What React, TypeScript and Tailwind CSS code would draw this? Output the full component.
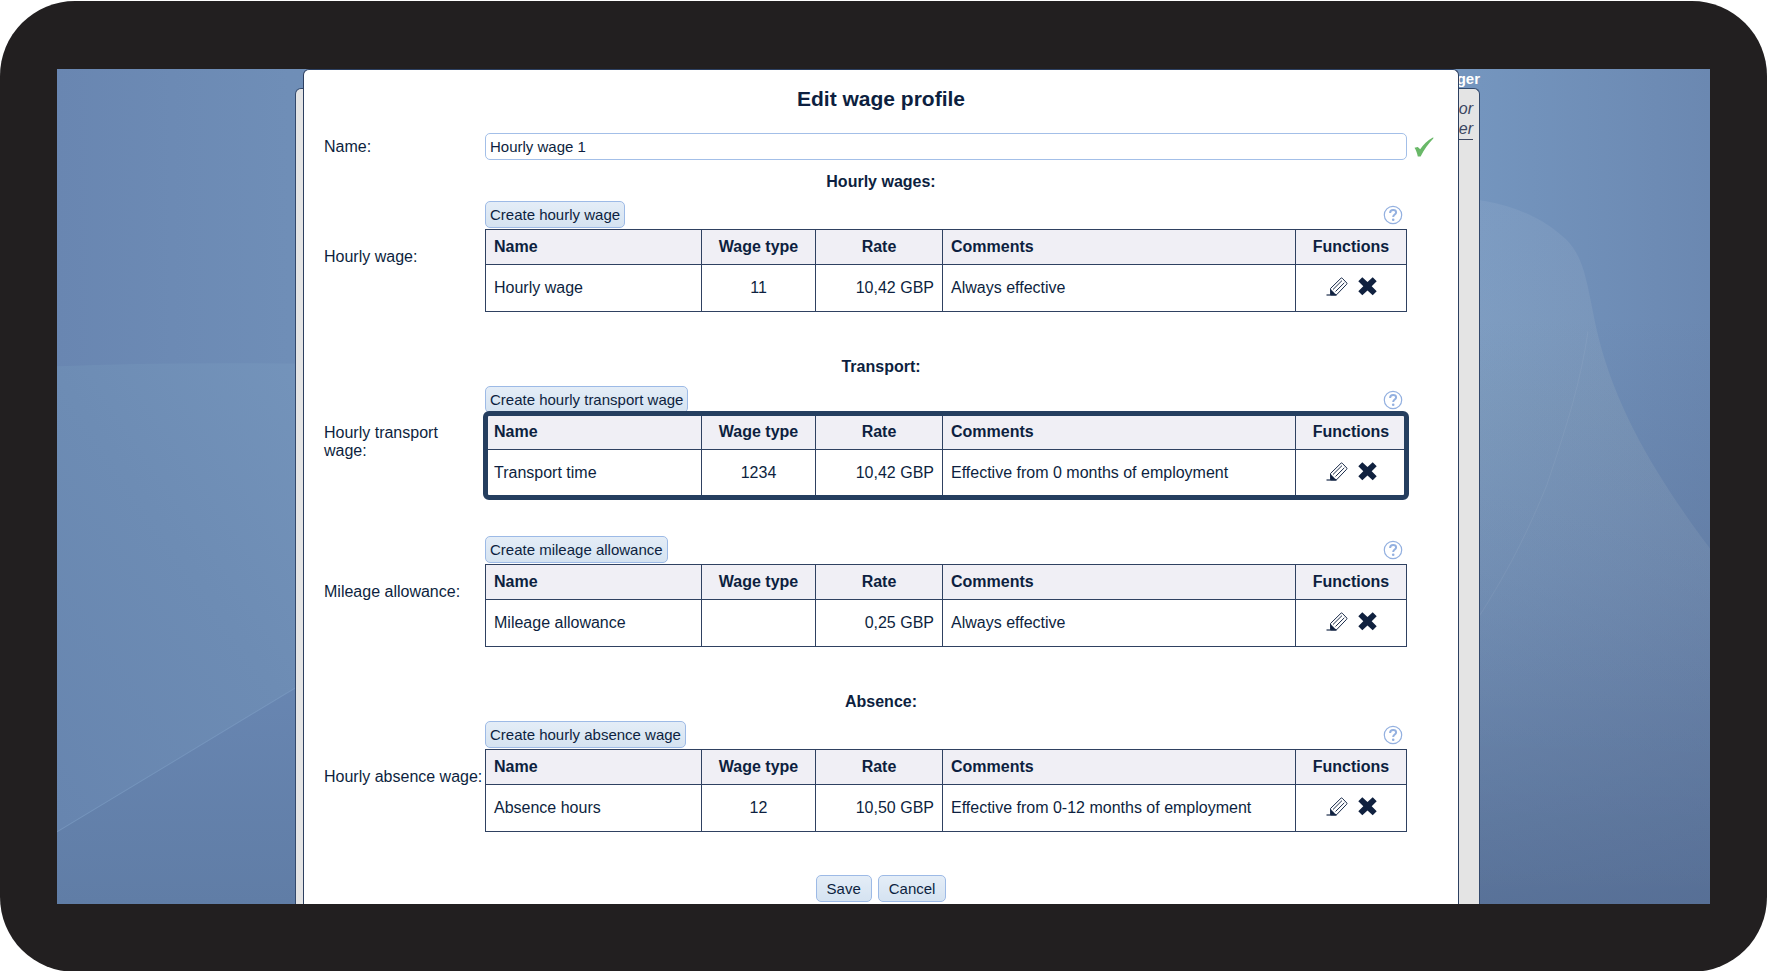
import { useState } from "react";

interface WageRow {
  name: string;
  wageType: string;
  rate: string;
  comments: string;
}

interface WageSection {
  id: string;
  heading?: string;
  label: string;
  createLabel: string;
  highlighted?: boolean;
  rows: WageRow[];
}

const sections: WageSection[] = [
  {
    id: "hourly",
    heading: "Hourly wages:",
    label: "Hourly wage:",
    createLabel: "Create hourly wage",
    rows: [
      { name: "Hourly wage", wageType: "11", rate: "10,42 GBP", comments: "Always effective" },
    ],
  },
  {
    id: "transport",
    heading: "Transport:",
    label: "Hourly transport wage:",
    createLabel: "Create hourly transport wage",
    highlighted: true,
    rows: [
      {
        name: "Transport time",
        wageType: "1234",
        rate: "10,42 GBP",
        comments: "Effective from 0 months of employment",
      },
    ],
  },
  {
    id: "mileage",
    label: "Mileage allowance:",
    createLabel: "Create mileage allowance",
    rows: [
      { name: "Mileage allowance", wageType: "", rate: "0,25 GBP", comments: "Always effective" },
    ],
  },
  {
    id: "absence",
    heading: "Absence:",
    label: "Hourly absence wage:",
    createLabel: "Create hourly absence wage",
    rows: [
      {
        name: "Absence hours",
        wageType: "12",
        rate: "10,50 GBP",
        comments: "Effective from 0-12 months of employment",
      },
    ],
  },
];

const buttonBase =
  "h-[27px] rounded-[5px] border border-[#9dbae6] bg-linear-to-b from-[#e4edf7] to-[#d5e3f1] text-[15px] leading-[18px] whitespace-nowrap";

export default function App() {
  return (
    <div className="min-h-screen bg-white pt-px flex font-['Liberation_Sans',Arial,sans-serif] text-base text-[#0d1f40]">
      {/* Device frame */}
      <div className="flex-1 flex rounded-[75px] bg-[#221f20] px-[57px] py-[68px]">
        {/* Screen */}
        <div className="relative flex-1 flex overflow-hidden bg-[#6c8bb4] pl-2">
          <Backdrop />
          <div className="relative mx-auto grid w-full max-w-[1185px]">
            <PageBehind />
            <EditWageProfile />
          </div>
        </div>
      </div>
    </div>
  );
}

function PageBehind() {
  return (
    <div className="col-start-1 row-start-1 flex flex-col text-right">
      <p className="h-[19px] text-[15px] leading-[19px] font-bold text-white">ger</p>
      <div className="flex-1 rounded-t-md border border-b-0 border-[#33496c] bg-[#e4e4e4] pt-2.5 pr-1.5 italic leading-5 text-[#3b4660]">
        <p>or</p>
        <p className="ml-auto w-40 border-b border-[#3b4660]">er</p>
      </div>
    </div>
  );
}

function EditWageProfile() {
  const [name, setName] = useState("Hourly wage 1");

  return (
    <form
      className="relative col-start-1 row-start-1 ml-2 mr-[21px] rounded-t-md border border-b-0 border-[#2c3f60] bg-white pb-0.5"
      onSubmit={(e) => e.preventDefault()}
    >
      <h1 className="pt-[17px] pb-[22px] text-center text-[21px] leading-6 font-bold">
        Edit wage profile
      </h1>

      <div className="grid grid-cols-[161px_1fr_51px] items-center pl-5 pb-1.5">
        <label htmlFor="profile-name">Name:</label>
        <input
          id="profile-name"
          type="text"
          value={name}
          onChange={(e) => setName(e.target.value)}
          className="h-[27px] w-full rounded-[5px] border border-[#a3bfe8] bg-white px-1 text-[15px] outline-none"
        />
        <CheckIcon />
      </div>

      {sections.map((section) => (
        <Section key={section.id} section={section} />
      ))}

      <div className="mt-1 flex justify-center gap-1.5">
        <button type="submit" className={`${buttonBase} px-2.5`}>
          Save
        </button>
        <button type="button" className={`${buttonBase} px-2.5`}>
          Cancel
        </button>
      </div>
    </form>
  );
}

function Section({ section }: { section: WageSection }) {
  return (
    <section aria-labelledby={`${section.id}-label`}>
      {section.heading && (
        <h2 className="h-[35px] text-center leading-8 font-bold">{section.heading}</h2>
      )}
      <div className="grid grid-cols-[161px_1fr_51px] items-center pl-5 pb-[39px]">
        <p id={`${section.id}-label`} className="pr-px leading-[18px]">
          {section.label}
        </p>
        <div>
          <div className="flex h-7 items-start justify-between pr-1">
            <button type="button" className={`${buttonBase} px-1`}>
              {section.createLabel}
            </button>
            <button type="button" aria-label="Help" className="mt-1">
              <HelpIcon />
            </button>
          </div>
          <div className="relative">
            <WageTable rows={section.rows} labelledBy={`${section.id}-label`} />
            {section.highlighted && (
              <div className="pointer-events-none absolute -inset-x-0.5 -inset-y-[3px] rounded-md border-5 border-[#253e5f]" />
            )}
          </div>
        </div>
      </div>
    </section>
  );
}

function WageTable({ rows, labelledBy }: { rows: WageRow[]; labelledBy: string }) {
  const cell = "border border-[#2f4161] px-2";

  return (
    <table aria-labelledby={labelledBy} className="w-full table-fixed border-collapse">
      <colgroup>
        <col className="w-[216px]" />
        <col className="w-[114px]" />
        <col className="w-[127px]" />
        <col />
        <col className="w-[111px]" />
      </colgroup>
      <thead>
        <tr className="h-[35px] bg-[#f0eff5]">
          <th className={`${cell} text-left`}>Name</th>
          <th className={cell}>Wage type</th>
          <th className={cell}>Rate</th>
          <th className={`${cell} text-left`}>Comments</th>
          <th className={cell}>Functions</th>
        </tr>
      </thead>
      <tbody>
        {rows.map((row) => (
          <tr key={row.name} className="h-[47px]">
            <td className={cell}>{row.name}</td>
            <td className={`${cell} text-center`}>{row.wageType}</td>
            <td className={`${cell} text-right`}>{row.rate}</td>
            <td className={cell}>{row.comments}</td>
            <td className={cell}>
              <div className="flex justify-center gap-2.5 pb-1">
                <button type="button" aria-label="Edit">
                  <PencilIcon />
                </button>
                <button type="button" aria-label="Delete">
                  <CrossIcon />
                </button>
              </div>
            </td>
          </tr>
        ))}
      </tbody>
    </table>
  );
}

function CheckIcon() {
  return (
    <svg className="ml-[7px]" width="20" height="20" viewBox="0 0 20 20" aria-hidden="true">
      <path d="M0.5 10.8 L3.8 10 L6.2 12.2 C9 8 13.5 3 19.3 0.3 L19.3 1.5 C14.5 6.500 10 12.500 6.600 19.500 L3.800 19.500 C3.200 16.500 2.200 13.500 0.500 10.800 Z" fill="#69b868" />
    </svg>
  );
}

function HelpIcon() {
  return (
    <svg width="20" height="20" viewBox="0 0 20 20" fill="none" aria-hidden="true">
      <circle cx="10" cy="10" r="8.7" stroke="#93b0e0" strokeWidth="1.2" />
      <path
        d="M7.100 8 C7.100 6 8.300 5.100 10.100 5.100 C11.900 5.100 13.100 6.100 13.100 7.500 C13.100 9.600 10.200 9.500 10.200 12"
        stroke="#93b0e0"
        strokeWidth="2"
      />
      <circle cx="10.200" cy="14.800" r="1.300" fill="#93b0e0" />
    </svg>
  );
}

function PencilIcon() {
  return (
    <svg width="22" height="19" viewBox="0 0 22 19" fill="none" stroke="#1b2c4b" aria-hidden="true">
      <path d="M4.500 11.500 L15 1.200 Q15.600 0.700 16.200 1.200 L20.800 6 Q21.200 6.600 20.700 7.200 L10.500 17.800 L4.800 17.800 Z" strokeWidth="1" />
      <path d="M7 12.500 L16 3.600 M9.500 14.500 L18.300 5.800" strokeWidth="1" />
      <path d="M4.500 12.200 L10.200 18 L4.500 18 Z" fill="#10203f" strokeWidth="0.500" />
      <path d="M0.500 18 H10.500" strokeWidth="1.200" />
    </svg>
  );
}

function CrossIcon() {
  return (
    <svg width="19" height="19" viewBox="0 0 19 19" aria-hidden="true">
      <path
        d="M4.300 0.300 L9.500 5 L14.700 0.300 L18.700 4.300 L13.700 9.300 L18.700 14.300 L14.700 18.300 L9.500 13.600 L4.300 18.300 L0.300 14.300 L5.300 9.300 L0.300 4.300 Z"
        fill="#10213f"
      />
    </svg>
  );
}

// Soft blue wallpaper with large overlapping shapes
function Backdrop() {
  return (
    <svg
      className="absolute inset-0 h-full w-full"
      viewBox="0 0 1653 834"
      preserveAspectRatio="none"
      aria-hidden="true"
    >
      <defs>
        <linearGradient id="base" x1="0" y1="0" x2="1" y2="0">
          <stop offset="0" stopColor="#6986b1" />
          <stop offset="0.14" stopColor="#6f8eb7" />
          <stop offset="0.86" stopColor="#7495be" />
          <stop offset="1" stopColor="#6b88b1" />
        </linearGradient>
        <linearGradient id="shade" x1="0" y1="0" x2="0" y2="1">
          <stop offset="0.3" stopColor="#52698f" stopOpacity="0" />
          <stop offset="0.6" stopColor="#52698f" stopOpacity="0.3" />
          <stop offset="1" stopColor="#52698f" stopOpacity="0.8" />
        </linearGradient>
        <linearGradient id="leftPanel" x1="1" y1="0" x2="0.2" y2="1">
          <stop offset="0" stopColor="#7595bc" />
          <stop offset="0.5" stopColor="#6d8cb4" />
          <stop offset="1" stopColor="#6785af" />
        </linearGradient>
        <linearGradient id="leftLow" x1="0" y1="0" x2="0" y2="1">
          <stop offset="0" stopColor="#6987b3" />
          <stop offset="1" stopColor="#607da6" />
        </linearGradient>
        <linearGradient id="hill" x1="0" y1="0" x2="0" y2="1">
          <stop offset="0" stopColor="#ffffff" stopOpacity="0.06" />
          <stop offset="0.3" stopColor="#cfd8c8" stopOpacity="0.11" />
          <stop offset="0.75" stopColor="#ffffff" stopOpacity="0.03" />
          <stop offset="1" stopColor="#ffffff" stopOpacity="0" />
        </linearGradient>
      </defs>
      <rect width="1653" height="834" fill="url(#base)" />
      <rect x="800" width="853" height="834" fill="url(#shade)" />
      <path d="M0 297 Q120 292 300 295 L300 834 L0 834 Z" fill="url(#leftPanel)" />
      <path d="M0 762 L300 581 L300 834 L0 834 Z" fill="url(#leftLow)" />
      <path d="M0 762 L300 581" stroke="#7b9bc2" strokeWidth="1" opacity="0.7" />
      <path
        d="M1380 128 C1440 128 1480 143 1510 171 C1528 190 1530 215 1540 262 C1556 330 1590 395 1653 479 L1653 834 L1380 834 Z"
        fill="url(#hill)"
      />
      <path
        d="M1531 262 C1524 310 1512 350 1490 415 C1470 465 1445 515 1400 580"
        stroke="#ffffff"
        strokeWidth="1"
        fill="none"
        opacity="0.06"
      />
    </svg>
  );
}
